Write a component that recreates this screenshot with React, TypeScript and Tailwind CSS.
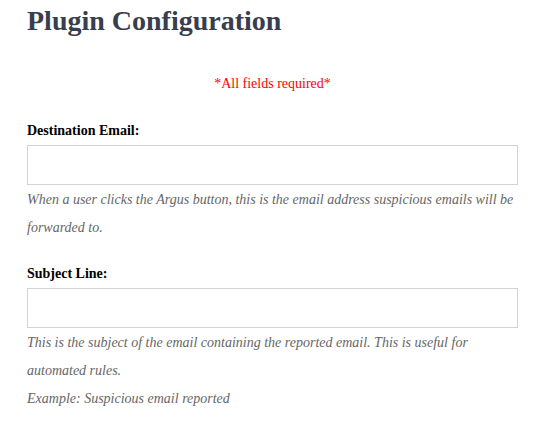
import React from "react";

const Field = ({ label, help }: { label: string; help: React.ReactNode }) => (
  <div className="flex flex-col">
    <label className="text-[14px] font-bold text-black leading-[16px]">{label}</label>
    <input
      type="text"
      className="mt-[6px] h-[40px] w-full border border-[#d3d3d3] bg-white outline-none"
    />
    <div className="mt-[1px] text-[14px] italic leading-[28px] text-[#666666]">{help}</div>
  </div>
);

export default function App() {
  return (
    <div className="min-h-[437px] bg-white px-[27px] font-['Liberation_Serif',serif]">
      <div className="w-[491px]">
        <h1 className="pt-[5px] text-[28px] font-bold leading-[32px] text-[#393e4e]">
          Plugin Configuration
        </h1>
        <p className="mt-[39px] text-center text-[14px] leading-[16px] text-[#ff0000]">
          *All fields required*
        </p>
        <div className="mt-[31px]">
          <Field
            label="Destination Email:"
            help="When a user clicks the Argus button, this is the email address suspicious emails will be forwarded to."
          />
        </div>
        <div className="mt-[24px]">
          <Field
            label="Subject Line:"
            help={
              <>
                <p>This is the subject of the email containing the reported email. This is useful for automated rules.</p>
                <p>Example: Suspicious email reported</p>
              </>
            }
          />
        </div>
      </div>
    </div>
  );
}
